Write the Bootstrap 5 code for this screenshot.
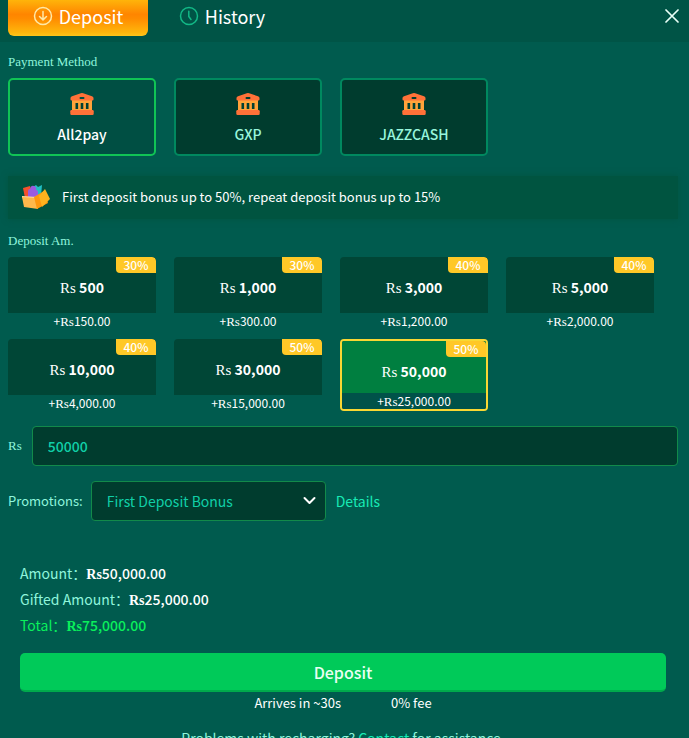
<!DOCTYPE html>
<html lang="en">
<head>
<meta charset="utf-8">
<meta name="viewport" content="width=device-width, initial-scale=1">
<title>Deposit</title>
<link href="https://cdn.jsdelivr.net/npm/bootstrap@5.3.0/dist/css/bootstrap.min.css" rel="stylesheet">
<style>
  body { background: #005b4e; color: #fff; font-family: "Noto Sans CJK SC", sans-serif; font-size: 14px; line-height: 24px; }
  .topbar { background: #005446; height: 42px; padding: 0 8px; }
  .tab { border: 0; background: none; color: #fff; font-size: 18px; line-height: 24px; width: 140px; height: 36px; gap: 6px; border-radius: 0 0 6px 6px; padding: 0 0 4px; }
  .tab-on { background: linear-gradient(#ffb40a 0, #ff8500 40%, #ff8c00 52%, #ffb60c 90%, #ffc51b); }
  .close-x { border: 0; background: none; padding: 0; width: 18px; height: 32px; }
  .sheet { padding: 10px 11px 0 8px; }
  .serif, .sect { font-family: "Liberation Serif", serif; }
  .sect { color: #8ff5dc; font-size: 13px; line-height: 20px; margin: 0; }
  .sheet h2.sect { margin-bottom: 6px; }
  .tiles { margin: 0 6px 0 0; row-gap: 10px; }
  .tiles > * { padding: 0 18px 0 0; }
  .method { height: 78px; border: 2px solid #00895f; border-radius: 5px; background: #003c2e; color: #98f5dc; font-weight: 500; font-size: 14px; line-height: 24px; gap: 6px; padding: 4px 0 0; }
  .method-on { background: #004f43; border-color: #10c455; color: #fff; }
  .notice { background: #005440; height: 43px; margin: 20px 0 12px; padding: 0 12px 2px; gap: 11px; font-size: 13px; box-shadow: 0 0 6px #005440; }
  .amt { border: 0; padding: 0; background: none; color: #fff; height: 72px; border-radius: 4px; overflow: hidden; }
  .amt-main { height: 56px; background: #004636; font-size: 14px; line-height: 24px; font-weight: 700; padding-top: 18px; flex: none; }
  .amt-main .serif { font-weight: 400; font-size: 15px; line-height: 1; }
  .amt-bonus { font-size: 12px; line-height: 16px; }
  .amt-bonus .serif { font-size: 13px; line-height: 1; }
  .amt-on { border: 2px solid #f8d733; }
  .amt-on .amt-main { height: 52px; background: #007f40; }
  .amt-on .amt-bonus { background: #005249; }
  .pct { background: #ffc827; top: 0; right: 0; width: 40px; height: 16px; font-size: 12px; line-height: 16px; font-weight: 500; border-radius: 0 4px 0 4px; }
  .field, .field:focus { background-color: #003c2e; border: 1px solid #128a4a; border-radius: 4px; height: 40px; color: #10cfa8; padding: 0 15px; box-shadow: none; font-size: 14px; }
  .field-amount, .field-amount:focus { font-weight: 500; }
  .line { margin-top: 15px; gap: 10px; }
  .promo-label { font-size: 13px; margin-right: -2px; }
  .pick { width: 235px; }
  .pick select { appearance: none; }
  .pick svg { right: 10px; top: 15px; pointer-events: none; }
  .mint { color: #8ff5dc; }
  .linkish, .linkish:hover { color: #18eab5; text-decoration: none; }
  .totals { padding: 0 12px; margin-top: 39px; line-height: 26px; }
  .totals b { font-weight: 500; color: #fff; }
  .totals b .serif { font-weight: 700; line-height: 1; }
  .totals .sum, .totals .sum b { color: #0af05c; }
  .send, .send:hover { background: #00ca59; color: #e9fff3; border: 0; border-bottom: 2px solid #00aa4c; border-radius: 5px; height: 39px; margin-top: 15px; padding: 0; font-size: 16px; font-weight: 500; line-height: 36px; }
  .facts { font-size: 13px; line-height: 20px; gap: 50px; margin-top: 1px; }
  .help { font-size: 14px; line-height: 22px; margin: 14px 0 0; }
</style>
</head>
<body class="vh-100 overflow-hidden">
<svg class="d-none" aria-hidden="true">
  <symbol id="bank" viewBox="0 0 24 24">
    <path fill="#ffa33a" d="M2 8h20v11H2z"/>
    <path fill="#004033" d="M5.500 11h2.600v6H5.500zM10.700 11h2.600v6h-2.600zM15.900 11h2.600v6h-2.600z"/>
    <path fill="#ff7138" fill-rule="evenodd" d="M10.800 1.300 2 4.200Q.5 4.800.5 6v1.500q0 1 1 1h21q1 0 1-1V6q0-1.200-1.500-1.800l-8.800-2.900a4 4 0 0 0-2.400 0zM10.500 5h3q1 0 1 1t-1 1h-3q-1 0-1-1t1-1z"/>
    <path fill="#ff7138" d="M1.500 18h21q1.200 0 1.200 1.200v2.500q0 1.300-1.200 1.300h-21Q.3 23 .3 21.700v-2.500Q.3 18 1.500 18z"/>
  </symbol>
</svg>

<header class="topbar d-flex align-items-start">
  <button class="tab tab-on d-flex align-items-center justify-content-center" type="button">
    <svg width="20" height="20" viewBox="0 0 20 20" fill="none" stroke="#ffe9a8" stroke-width="1.500" stroke-linecap="round" stroke-linejoin="round"><circle cx="10" cy="10" r="8.500"/><path d="M10 5.500v8.300M6.500 10.500l3.500 3.400 3.500-3.400"/></svg>
    <span>Deposit</span>
  </button>
  <button class="tab d-flex align-items-center justify-content-center ms-1" type="button">
    <svg width="20" height="20" viewBox="0 0 20 20" fill="none" stroke="#12b886" stroke-width="1.500" stroke-linecap="round" stroke-linejoin="round"><circle cx="10" cy="10" r="8.500"/><path d="M9.800 5.300v5.200l2.200 3"/></svg>
    <span>History</span>
  </button>
  <button class="close-x d-flex align-items-center justify-content-center ms-auto" type="button" aria-label="Close">
    <svg width="14" height="14" viewBox="0 0 14 14" stroke="#e8fff8" stroke-width="1.700" stroke-linecap="round"><path d="M1 1l12 12M13 1L1 13"/></svg>
  </button>
</header>

<main class="sheet">
  <h2 class="sect">Payment Method</h2>
  <div class="row tiles">
    <div class="col-3"><button type="button" class="method method-on w-100 d-flex flex-column align-items-center justify-content-center"><svg width="24" height="24"><use href="#bank"/></svg><span>All2pay</span></button></div>
    <div class="col-3"><button type="button" class="method w-100 d-flex flex-column align-items-center justify-content-center"><svg width="24" height="24"><use href="#bank"/></svg><span>GXP</span></button></div>
    <div class="col-3"><button type="button" class="method w-100 d-flex flex-column align-items-center justify-content-center"><svg width="24" height="24"><use href="#bank"/></svg><span>JAZZCASH</span></button></div>
  </div>

  <div class="notice d-flex align-items-center">
    <svg width="31" height="26" viewBox="0 0 31 26">
      <path fill="#f4512d" d="M3 4l7-2 3 10-8 2z"/>
      <path fill="#22bfc4" d="M13 3l3-2 2 2 4-2-1 11h-8z"/>
      <path fill="#9a5be0" d="M8 7q0-2 2-2 1-4 4-3t2 4q2 0 2 2v6H8z"/>
      <path fill="#ffe0a8" d="M2 12l15 1v3L2 14z"/>
      <path fill="#ffb84c" d="M2 13l16 1v11L4 23z"/>
      <path fill="#ff970e" d="M14 13l10-6 4 12-11 6z"/>
      <path fill="#ffb31e" d="M19 12l6-7 5 10-8 8z"/>
    </svg>
    <span>First deposit bonus up to 50%, repeat deposit bonus up to 15%</span>
  </div>

  <h2 class="sect">Deposit Am.</h2>
  <div class="row tiles">
    <div class="col-3"><button type="button" class="amt w-100 d-flex flex-column position-relative"><span class="amt-main w-100"><span class="serif">Rs</span> 500</span><span class="amt-bonus w-100">+<span class="serif">Rs</span>150.00</span><span class="pct position-absolute">30%</span></button></div>
    <div class="col-3"><button type="button" class="amt w-100 d-flex flex-column position-relative"><span class="amt-main w-100"><span class="serif">Rs</span> 1,000</span><span class="amt-bonus w-100">+<span class="serif">Rs</span>300.00</span><span class="pct position-absolute">30%</span></button></div>
    <div class="col-3"><button type="button" class="amt w-100 d-flex flex-column position-relative"><span class="amt-main w-100"><span class="serif">Rs</span> 3,000</span><span class="amt-bonus w-100">+<span class="serif">Rs</span>1,200.00</span><span class="pct position-absolute">40%</span></button></div>
    <div class="col-3"><button type="button" class="amt w-100 d-flex flex-column position-relative"><span class="amt-main w-100"><span class="serif">Rs</span> 5,000</span><span class="amt-bonus w-100">+<span class="serif">Rs</span>2,000.00</span><span class="pct position-absolute">40%</span></button></div>
    <div class="col-3"><button type="button" class="amt w-100 d-flex flex-column position-relative"><span class="amt-main w-100"><span class="serif">Rs</span> 10,000</span><span class="amt-bonus w-100">+<span class="serif">Rs</span>4,000.00</span><span class="pct position-absolute">40%</span></button></div>
    <div class="col-3"><button type="button" class="amt w-100 d-flex flex-column position-relative"><span class="amt-main w-100"><span class="serif">Rs</span> 30,000</span><span class="amt-bonus w-100">+<span class="serif">Rs</span>15,000.00</span><span class="pct position-absolute">50%</span></button></div>
    <div class="col-3"><button type="button" class="amt amt-on w-100 d-flex flex-column position-relative"><span class="amt-main w-100"><span class="serif">Rs</span> 50,000</span><span class="amt-bonus w-100">+<span class="serif">Rs</span>25,000.00</span><span class="pct position-absolute">50%</span></button></div>
  </div>

  <div class="line d-flex align-items-center">
    <label class="sect" for="amount">Rs</label>
    <input class="form-control field field-amount" id="amount" type="text" value="50000">
  </div>

  <div class="line d-flex align-items-center">
    <label class="mint promo-label" for="promo">Promotions:</label>
    <div class="pick position-relative">
      <select class="field w-100 d-block" id="promo"><option>First Deposit Bonus</option></select>
      <svg class="position-absolute" width="13" height="10" viewBox="0 0 13 10" fill="none" stroke="#fff" stroke-width="2" stroke-linecap="round" stroke-linejoin="round"><path d="M1.500 2l5 5 5-5"/></svg>
    </div>
    <a class="linkish" href="#">Details</a>
  </div>

  <section class="totals">
    <div class="mint">Amount：<b><span class="serif">Rs</span>50,000.00</b></div>
    <div class="mint">Gifted Amount：<b><span class="serif">Rs</span>25,000.00</b></div>
    <div class="sum">Total：<b><span class="serif">Rs</span>75,000.00</b></div>
    <button class="btn send w-100" type="button">Deposit</button>
    <div class="facts d-flex justify-content-center"><span>Arrives in ~30s</span><span>0% fee</span></div>
    <p class="help mint text-center">Problems with recharging? <a class="linkish" href="#">Contact</a> for assistance.</p>
  </section>
</main>
<script src="https://cdn.jsdelivr.net/npm/bootstrap@5.3.0/dist/js/bootstrap.bundle.min.js"></script>
</body>
</html>
